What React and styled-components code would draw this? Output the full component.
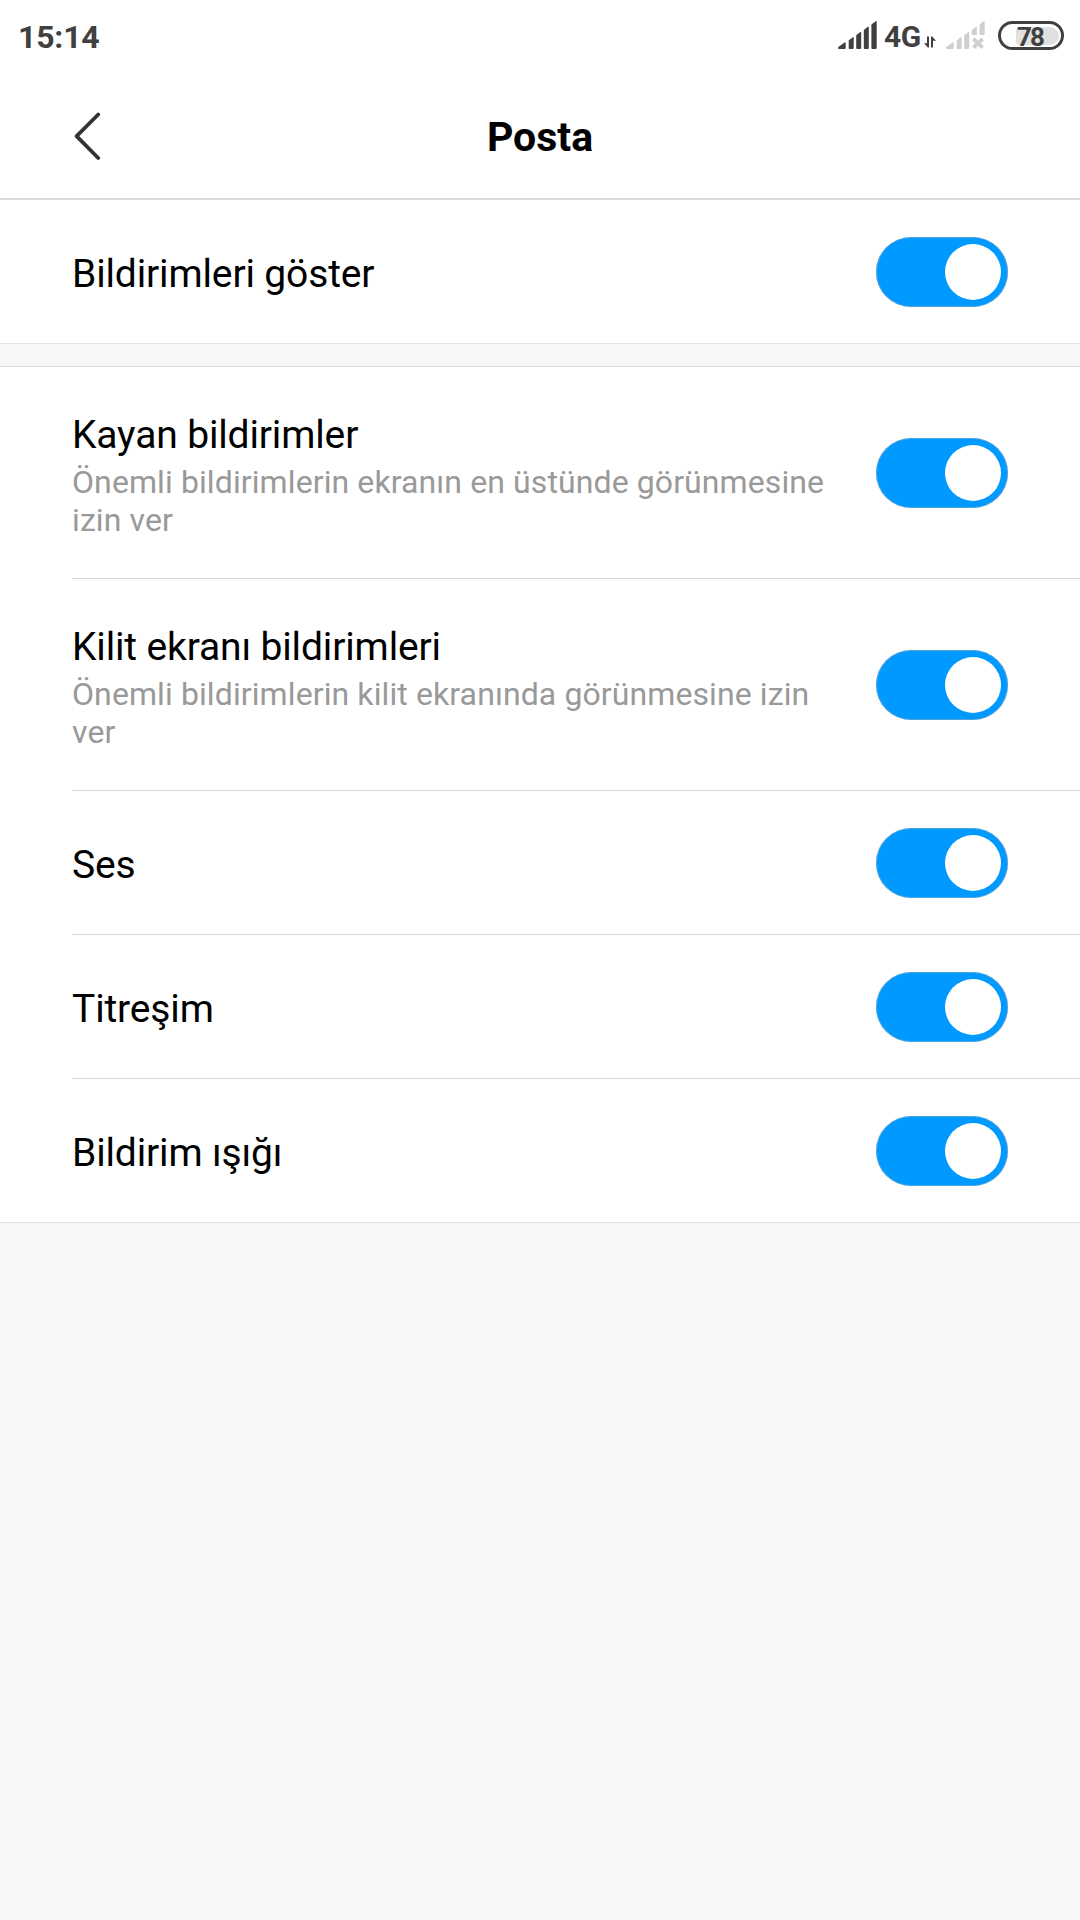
import React, { useState } from "react";
import styled, { createGlobalStyle } from "styled-components";

const GlobalStyle = createGlobalStyle`
  * { box-sizing: border-box; }
  body {
    margin: 0;
    background: #f7f7f7;
    font-family: Roboto, "Noto Sans", sans-serif;
  }
`;

const Screen = styled.div`
  width: 1080px;
  min-height: 1920px;
  display: flex;
  flex-direction: column;
  background: #f7f7f7;
`;

const StatusBar = styled.header`
  height: 72px;
  padding: 21px 16px 0 18px;
  display: flex;
  justify-content: space-between;
  align-items: flex-start;
  background: #fff;
  color: #404040;
`;

const Clock = styled.time`
  margin-top: -3px;
  font-size: 32px;
  line-height: 38px;
  font-weight: 700;
  letter-spacing: -0.2px;
`;

const StatusIcons = styled.div`
  display: flex;
  align-items: flex-start;
`;

const Signal = styled.svg`
  display: block;
  width: 39px;
  height: 28px;
  fill: ${(p) => p.$color};
`;

const Network = styled.span`
  width: 37px;
  margin: -2px 0 0 7px;
  font-size: 30px;
  line-height: 36px;
  font-weight: 700;
  letter-spacing: -0.5px;
`;

const DataArrows = styled.svg`
  display: block;
  width: 12px;
  height: 28px;
  margin: 0 9.5px 0 3px;
  fill: #404040;
`;

const Battery = styled.div`
  width: 66px;
  height: 29px;
  margin-left: 13.5px;
  border: 3px solid #404040;
  border-radius: 15px;
  padding: 2.5px;
  display: grid;
  justify-items: end;
`;

const Charge = styled.span`
  grid-area: 1 / 1;
  width: 43px;
  height: 18px;
  border-radius: 3px 9px 9px 3px;
  background: #e0e0e0;
`;

const ChargeText = styled.span`
  grid-area: 1 / 1;
  justify-self: center;
  align-self: center;
  margin-right: 2px;
  padding-top: 1px;
  font-size: 26px;
  line-height: 18px;
  font-weight: 700;
  letter-spacing: -2px;
`;

const TitleBar = styled.nav`
  height: 128px;
  padding: 2px 72px 0;
  display: grid;
  grid-template-columns: 32px 1fr 32px;
  align-items: center;
  background: #fff;
  border-bottom: 2px solid #d9d9d9;
`;

const BackButton = styled.button`
  padding: 0;
  border: 0;
  background: none;
  display: flex;
`;

const Title = styled.h1`
  margin: 2px 0 0;
  color: #000;
  font-size: 41px;
  line-height: 48px;
  font-weight: 700;
  text-align: center;
`;

const Group = styled.section`
  background: #fff;
  border-top: ${(p) => (p.$spaced ? "1px solid #dcdcdc" : "0")};
  margin-top: ${(p) => (p.$spaced ? "22px" : "0")};
`;

const Item = styled.div`
  height: ${(p) => (p.$tall ? 212 : 144)}px;
  margin-left: 72px;
  padding-right: 72px;
  display: flex;
  align-items: center;
  justify-content: space-between;
  border-bottom: 1px solid #d8d8d8;

  &:last-child {
    margin-left: 0;
    padding-left: 72px;
    border-bottom-color: #e2e2e2;
  }
`;

const Labels = styled.div`
  width: 770px;
  padding-top: ${(p) => (p.$tall ? 6 : 5)}px;
`;

const Label = styled.div`
  color: #000;
  font-size: 39px;
  line-height: 46px;
  letter-spacing: -0.14px;
`;

const Summary = styled.div`
  margin-top: 5px;
  color: #999;
  font-size: 32px;
  line-height: 38px;
  letter-spacing: 0.1px;
`;

const Switch = styled.button`
  width: 132px;
  height: 70px;
  margin-top: 1px;
  padding: 0 7px;
  border: 0;
  border-radius: 35px;
  display: flex;
  align-items: center;
  justify-content: ${(p) => (p.$on ? "flex-end" : "flex-start")};
  background: ${(p) => (p.$on ? "#0099ff" : "#d9d9d9")};
  box-shadow: inset 0 0 0 1px rgba(150, 170, 190, 0.55);
`;

const Knob = styled.span`
  width: 56px;
  height: 56px;
  border-radius: 50%;
  background: #fff;
`;

const general = [{ label: "Bildirimleri göster" }];

const details = [
  {
    label: "Kayan bildirimler",
    summary: "Önemli bildirimlerin ekranın en üstünde görünmesine izin ver",
  },
  {
    label: "Kilit ekranı bildirimleri",
    summary: "Önemli bildirimlerin kilit ekranında görünmesine izin ver",
  },
  { label: "Ses" },
  { label: "Titreşim" },
  { label: "Bildirim ışığı" },
];

function Setting({ label, summary }) {
  const [on, setOn] = useState(true);
  const tall = Boolean(summary);
  return (
    <Item $tall={tall}>
      <Labels $tall={tall}>
        <Label>{label}</Label>
        {summary && <Summary>{summary}</Summary>}
      </Labels>
      <Switch
        type="button"
        role="switch"
        aria-checked={on}
        aria-label={label}
        $on={on}
        onClick={() => setOn(!on)}
      >
        <Knob />
      </Switch>
    </Item>
  );
}

function SignalBars({ color, missing }) {
  return (
    <Signal viewBox="0 0 39 28" $color={color}>
      <path d="M1 28Q0 28 0 26.8Q0 26 1 25.4L6.5 21.4Q7.7 20.8 7.7 22V27Q7.7 28 6.7 28Z" />
      <path d="M10.7 19.4L14.4 16.4Q15.7 15.6 15.7 17V27Q15.7 28 14.7 28H11.7Q10.7 28 10.7 27Z" />
      <path d="M18.2 14.2L21.9 11.2Q23.2 10.4 23.2 11.8V27Q23.2 28 22.2 28H19.2Q18.2 28 18.2 27Z" />
      {missing ? (
        <>
          <path d="M25.8 9L29.5 6Q30.8 5.2 30.8 6.6V14H26.8Q25.8 14 25.8 13Z" />
          <path d="M33.6 3.4L37.4 .4Q38.7-.4 38.7 1V13Q38.7 14 37.7 14H34.6Q33.6 14 33.6 13Z" />
          <path
            d="M27.4 17.8L36.6 26.6M36.6 17.8L27.4 26.6"
            fill="none"
            stroke={color}
            strokeWidth="3.8"
          />
        </>
      ) : (
        <>
          <path d="M25.8 9L29.5 6Q30.8 5.2 30.8 6.6V27Q30.8 28 29.8 28H26.8Q25.8 28 25.8 27Z" />
          <path d="M33.4 3.4L37.4 .4Q38.7-.4 38.7 1V27Q38.7 28 37.7 28H34.4Q33.4 28 33.4 27Z" />
        </>
      )}
    </Signal>
  );
}

export default function App() {
  return (
    <Screen>
      <GlobalStyle />
      <StatusBar>
        <Clock>15:14</Clock>
        <StatusIcons>
          <SignalBars color="#404040" />
          <Network>4G</Network>
          <DataArrows viewBox="0 0 12 28">
            <path d="M3 15.5H5V26.5H3.8L0 22.2H3Z" />
            <path d="M7 26.5V15.5H8.2L12 19.8H9V26.5Z" />
          </DataArrows>
          <SignalBars color="#cfcfcf" missing />
          <Battery>
            <Charge />
            <ChargeText>78</ChargeText>
          </Battery>
        </StatusIcons>
      </StatusBar>
      <TitleBar>
        <BackButton type="button" aria-label="Geri">
          <svg width="32" height="48" viewBox="0 0 32 48" fill="none">
            <path
              d="M26.2 2.5L4.6 24.2L26.2 46"
              stroke="#333"
              strokeWidth="3.8"
              strokeLinecap="round"
              strokeLinejoin="round"
            />
          </svg>
        </BackButton>
        <Title>Posta</Title>
      </TitleBar>
      <main>
        <Group>
          {general.map((s) => (
            <Setting key={s.label} {...s} />
          ))}
        </Group>
        <Group $spaced>
          {details.map((s) => (
            <Setting key={s.label} {...s} />
          ))}
        </Group>
      </main>
    </Screen>
  );
}
